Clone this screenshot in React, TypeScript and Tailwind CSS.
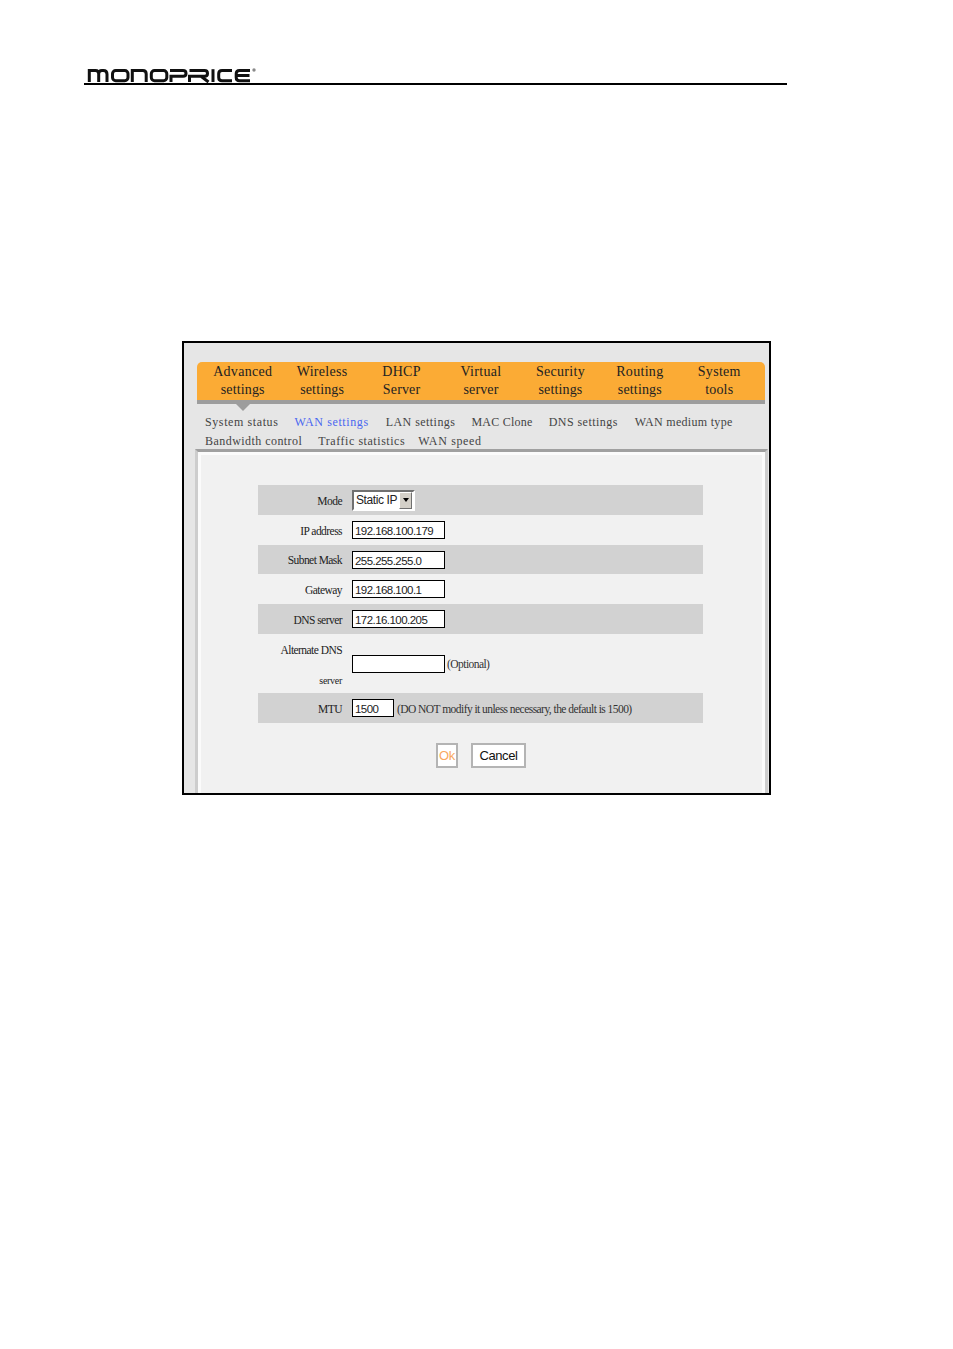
const tabs: [string, string][] = [
  ["Advanced", "settings"],
  ["Wireless", "settings"],
  ["DHCP", "Server"],
  ["Virtual", "server"],
  ["Security", "settings"],
  ["Routing", "settings"],
  ["System", "tools"],
];

function Logo() {
  return (
    <svg width="175" height="18" viewBox="0 0 175 18" className="block">
      <g fill="none" stroke="#111" strokeWidth="3">
        <path d="M5.300 16V4.500h6.200q3.200 0 3.200 3.200V16M14.700 7.700q0-3.200 3.200-3.200h1.400q3.700 0 3.700 3.700V16" />
        <rect x="28.500" y="4.500" width="15.500" height="10.200" rx="3.200" />
        <path d="M48.300 16V4.500h10.500q3.400 0 3.400 3.400V16" />
        <rect x="67.300" y="4.500" width="15.500" height="10.200" rx="3.200" />
        <path d="M87 16V10.300h12q3 0 3-2.900t-3-2.900H86" />
        <path d="M105.500 16V10.300h15q3 0 3-2.900t-3-2.900h-15M117 10.300l7.500 5.700" />
        <path d="M129 3.200V16" />
        <path d="M148 4.500h-10q-3.300 0-3.300 3.200v3.800q0 3.200 3.300 3.200h10" />
        <path d="M166 4.500h-10.500q-3.300 0-3.300 3.200v3.800q0 3.200 3.300 3.200H166M153 9.600h12.500" />
      </g>
      <circle cx="170" cy="4" r="1.700" fill="#8a8a8a" />
    </svg>
  );
}

function TextInput({ value, width = "w-[93px]" }: { value: string; width?: string }) {
  return (
    <input
      readOnly
      value={value}
      className={`${width} h-[18px] border border-black bg-white pl-[2px] pt-[2px] text-[11.500px] tracking-[-0.55px] text-[#222] outline-none [font-family:'Liberation_Sans',sans-serif]`}
    />
  );
}

function Row({
  label,
  shaded,
  h,
  children,
}: {
  label: React.ReactNode;
  shaded?: boolean;
  h: string;
  children: React.ReactNode;
}) {
  return (
    <div className={`flex items-center ${h} ${shaded ? "bg-[#d2d2d2]" : ""}`}>
      <div className="w-[84px] pt-[3px] text-right text-[11.500px] tracking-[-0.55px] text-[#222]">{label}</div>
      <div className="ml-[10px] flex items-center gap-[2px]">{children}</div>
    </div>
  );
}

export default function App() {
  return (
    <div className="h-[1349px] w-[953px] overflow-hidden bg-white pl-[84px] pt-[66px] [font-family:'Liberation_Serif',serif]">
      <div className="h-[19px] w-[703px] border-b-2 border-black">
        <Logo />
      </div>
      <div className="ml-[98px] mt-[256px] h-[454px] w-[589px] overflow-hidden border-2 border-black bg-[#e6e6e6] pl-[13px] pt-[19px]">
        <div className="w-[568px]">
          <div className="grid h-[42px] grid-cols-7 rounded-t-[5px] border-b-4 border-[#9d9d9d] bg-[#fbab35] px-[6px] pt-[1px] text-center text-[14px] leading-[18px] tracking-[0.3px] text-[#222]">
            {tabs.map(([a, b]) => (
              <div key={a} className="whitespace-nowrap">
                <div>{a}</div>
                <div className="tracking-[0.15px]">{b}</div>
              </div>
            ))}
          </div>
          <div className="ml-[39px] h-0 w-0 border-x-[7px] border-t-[7px] border-x-transparent border-t-[#9d9d9d]" />
        </div>
        <div className="ml-[8px] mt-[2px] h-[36px] text-[12px] leading-[19px] tracking-[0.45px] text-[#444]">
          <div className="flex">
            <span className="tracking-[0.6px]">System status</span>
            <span className="ml-[16px] tracking-[0.6px] text-[#4a66f0]">WAN settings</span>
            <span className="ml-[17px]">LAN settings</span>
            <span className="ml-[16px] tracking-[0.25px]">MAC Clone</span>
            <span className="ml-[16px]">DNS settings</span>
            <span className="ml-[17px] tracking-[0.3px]">WAN medium type</span>
          </div>
          <div className="flex">
            <span>Bandwidth control</span>
            <span className="ml-[16px] tracking-[0.55px]">Traffic statistics</span>
            <span className="ml-[13px] tracking-[0.65px]">WAN speed</span>
          </div>
        </div>
        <div className="-ml-[2px] h-[400px] w-[573px] border-x-[3px] border-t-[3px] border-x-[#cdcdcd] border-t-[#a0a0a0]">
          <div className="h-full border-x-[3px] border-t-[3px] border-[#fbfbfb] bg-[#f1f1f1] pl-[57px] pt-[30px]">
            <div className="w-[445px]">
              <Row label="Mode" shaded h="h-[30px]">
                <div className="flex h-[21px] w-[63px] items-center justify-between whitespace-nowrap border-2 border-[#707070] border-b-white border-r-white bg-white pl-[2px] text-[12px] tracking-[-0.4px] text-[#222] [font-family:'Liberation_Sans',sans-serif]">
                  <span>Static IP</span>
                  <span className="mr-[1px] flex h-[17px] w-[13px] items-center justify-center border border-[#707070] border-l-white border-t-white bg-[#d4d0c8]">
                    <span className="h-0 w-0 border-x-[3.500px] border-t-[4px] border-x-transparent border-t-black" />
                  </span>
                </div>
              </Row>
              <Row label="IP address" h="h-[30px]">
                <TextInput value="192.168.100.179" />
              </Row>
              <Row label="Subnet Mask" shaded h="h-[29px]">
                <TextInput value="255.255.255.0" />
              </Row>
              <Row label="Gateway" h="h-[30px]">
                <TextInput value="192.168.100.1" />
              </Row>
              <Row label="DNS server" shaded h="h-[30px]">
                <TextInput value="172.16.100.205" />
              </Row>
              <Row
                label={
                  <div className="flex flex-col">
                    <span>Alternate DNS</span>
                    <span className="mt-[14px] text-[10px] leading-[14px] tracking-[-0.3px]">server</span>
                  </div>
                }
                h="h-[59px]"
              >
                <TextInput value="" />
                <span className="pt-[3px] text-[11.500px] tracking-[-0.55px] text-[#333]">(Optional)</span>
              </Row>
              <Row label="MTU" shaded h="h-[30px]">
                <TextInput value="1500" width="w-[42px]" />
                <span className="ml-[1px] whitespace-nowrap pt-[3px] text-[11.500px] tracking-[-0.55px] text-[#333]">
                  (DO NOT modify it unless necessary, the default is 1500)
                </span>
              </Row>
            </div>
            <div className="ml-[178px] mt-[20px] flex gap-[13px] text-[13px] tracking-[-0.4px] [font-family:'Liberation_Sans',sans-serif]">
              <div className="flex h-[25px] w-[22px] items-center justify-center border-2 border-[#b4b4b4] bg-white text-[#f9a860]">Ok</div>
              <div className="flex h-[25px] w-[55px] items-center justify-center border-2 border-[#b4b4b4] bg-white text-[#111]">Cancel</div>
            </div>
          </div>
        </div>
      </div>
    </div>
  );
}
